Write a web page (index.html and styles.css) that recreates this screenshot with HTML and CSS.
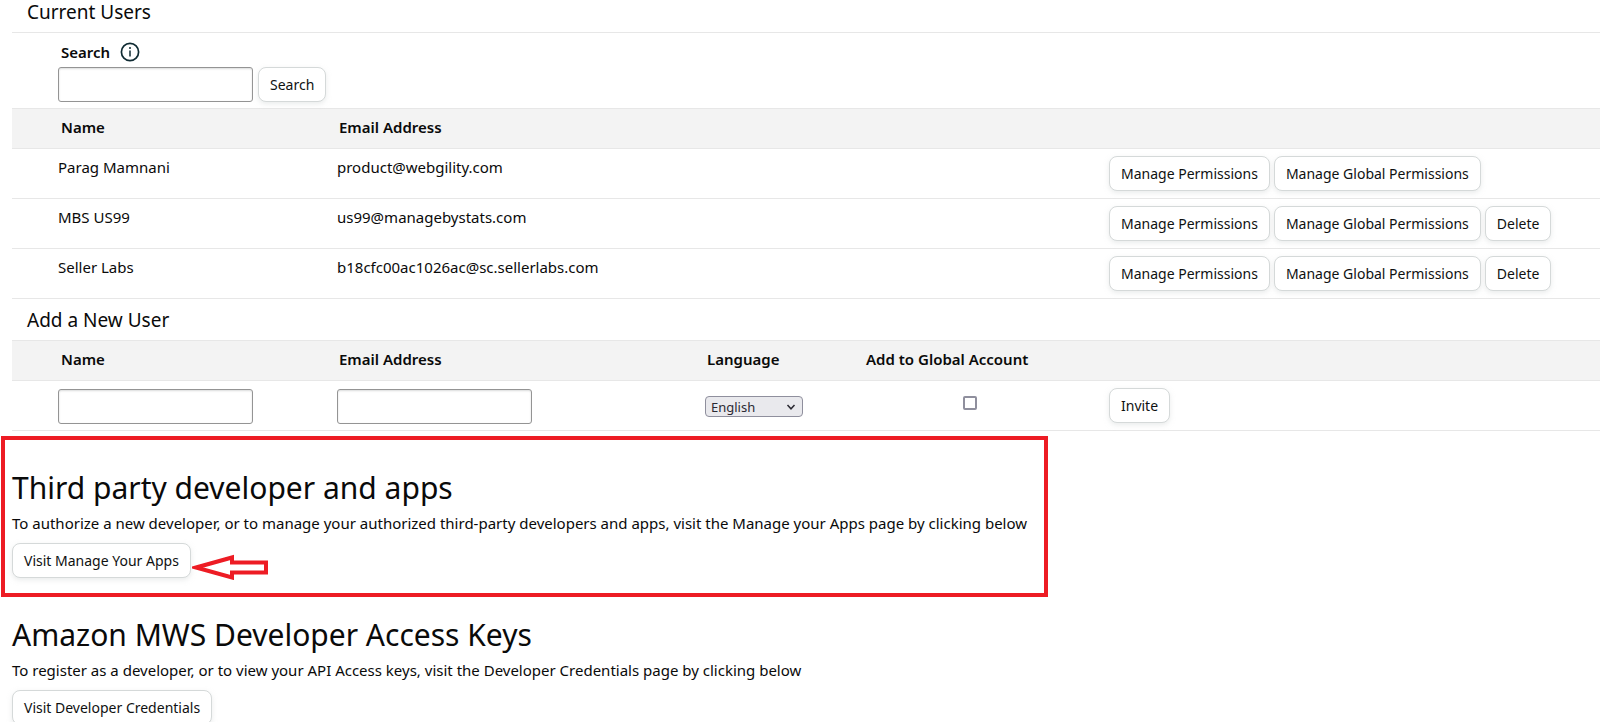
FILE: index.html
```html
<!DOCTYPE html>
<html lang="en">
<head>
<meta charset="utf-8">
<title>User Permissions</title>
<link rel="stylesheet" href="styles.css">
</head>
<body>
<main class="page">
  <section class="users">
    <h2 class="section-title first">Current Users</h2>
    <form class="search">
      <div class="search-label">
        <label for="search">Search</label>
        <svg class="info" viewBox="0 0 20 20" role="img" aria-label="Info">
          <circle cx="10" cy="10" r="8.6" fill="none" stroke="#0f2b33" stroke-width="1.7"/>
          <path d="M10 8.5V14.5" stroke="#0f2b33" stroke-width="1.5"/>
          <circle cx="10" cy="6" r="1" fill="#0f2b33"/>
        </svg>
      </div>
      <div class="search-row">
        <input class="field" id="search" type="text">
        <button class="btn" type="button">Search</button>
      </div>
    </form>
    <table class="grid">
      <colgroup><col class="c-name"><col class="c-email"><col class="c-lang"><col class="c-global"><col></colgroup>
      <thead>
        <tr><th>Name</th><th>Email Address</th><th></th><th></th><th></th></tr>
      </thead>
      <tbody>
        <tr><td>Parag Mamnani</td><td>product@webgility.com</td><td></td><td></td>
          <td><div class="actions"><button class="btn" type="button">Manage Permissions</button><button class="btn" type="button">Manage Global Permissions</button></div></td></tr>
        <tr><td>MBS US99</td><td>us99@managebystats.com</td><td></td><td></td>
          <td><div class="actions"><button class="btn" type="button">Manage Permissions</button><button class="btn" type="button">Manage Global Permissions</button><button class="btn" type="button">Delete</button></div></td></tr>
        <tr><td>Seller Labs</td><td>b18cfc00ac1026ac@sc.sellerlabs.com</td><td></td><td></td>
          <td><div class="actions"><button class="btn" type="button">Manage Permissions</button><button class="btn" type="button">Manage Global Permissions</button><button class="btn" type="button">Delete</button></div></td></tr>
      </tbody>
    </table>
    <h2 class="section-title">Add a New User</h2>
    <table class="grid">
      <colgroup><col class="c-name"><col class="c-email"><col class="c-lang"><col class="c-global"><col></colgroup>
      <thead>
        <tr><th><label for="name">Name</label></th><th><label for="email">Email Address</label></th><th><label for="language">Language</label></th><th><label for="global">Add to Global Account</label></th><th></th></tr>
      </thead>
      <tbody>
        <tr>
          <td><input class="field" id="name" type="text"></td>
          <td><input class="field" id="email" type="text"></td>
          <td><div class="cell"><span class="select-wrap"><select class="select" id="language"><option>English</option></select><svg class="chevron" viewBox="0 0 10 8"><path d="M1.5 2L5 5.8L8.5 2" fill="none" stroke="#2b2a33" stroke-width="1.5"/></svg></span></div></td>
          <td><div class="cell middle"><input class="check" id="global" type="checkbox"></div></td>
          <td><div class="actions"><button class="btn" type="button">Invite</button></div></td>
        </tr>
      </tbody>
    </table>
  </section>
  <section class="panel highlighted">
    <h1 class="title">Third party developer and apps</h1>
    <p class="text">To authorize a new developer, or to manage your authorized third-party developers and apps, visit the Manage your Apps page by clicking below</p>
    <div class="panel-action">
      <button class="btn" type="button">Visit Manage Your Apps</button>
      <svg class="arrow" viewBox="0 0 78 26" aria-hidden="true">
        <path d="M4 13.500L40 3.500V8.500H74V18.500H40V23.500Z" fill="#fff" stroke="#ed1c24" stroke-width="4"/>
      </svg>
    </div>
  </section>
  <section class="panel">
    <h1 class="title">Amazon MWS Developer Access Keys</h1>
    <p class="text">To register as a developer, or to view your API Access keys, visit the Developer Credentials page by clicking below</p>
    <div class="panel-action">
      <button class="btn" type="button">Visit Developer Credentials</button>
    </div>
  </section>
</main>
</body>
</html>
```
FILE: styles.css
```css
* { box-sizing: border-box; }
html { overflow: hidden; }
body {
  margin: 0;
  background: #fff;
  color: #0a0a0a;
  font: 15px/20px "Noto Sans", "Open Sans", sans-serif;
}
.users { padding-left: 12px; }
.section-title {
  margin: 0;
  padding: 9px 15px 8px;
  font-size: 19px;
  line-height: 24px;
  font-weight: 400;
}
.section-title.first {
  padding-top: 0;
  border-bottom: 1px solid #e7e7e7;
}
.search { padding: 9px 0 6px 46px; }
.search-label {
  display: flex;
  align-items: center;
  gap: 10px;
  padding-left: 3px;
  margin-bottom: 5px;
  font-weight: 600;
}
.info { width: 20px; height: 20px; }
.search-row { display: flex; gap: 5px; }
.field {
  display: block;
  width: 195px;
  height: 35px;
  padding: 0 8px;
  border: 1px solid #949494;
  border-radius: 3px;
  background: #fff;
  box-shadow: inset 0 1px 2px rgba(15, 17, 17, .15);
  font: inherit;
}
.btn {
  height: 35px;
  padding: 0 11px;
  border: 1px solid #d5d9d9;
  border-radius: 8px;
  background: #fff;
  box-shadow: 0 2px 5px rgba(213, 217, 217, .5);
  color: #0f1111;
  font: 14px/20px "Noto Sans", "Open Sans", sans-serif;
  white-space: nowrap;
}
.grid {
  width: 100%;
  table-layout: fixed;
  border-collapse: collapse;
}
.c-name { width: 323px; }
.c-email { width: 368px; }
.c-lang { width: 159px; }
.c-global { width: 213px; }
.grid th {
  height: 40px;
  padding: 0 0 4px 4px;
  border-top: 1px solid #e7e7e7;
  border-bottom: 1px solid #e7e7e7;
  background: #f3f3f3;
  font-weight: 600;
  text-align: left;
}
.grid td {
  height: 50px;
  padding: 8px 0 6px 2px;
  border-bottom: 1px solid #e7e7e7;
  vertical-align: top;
}
.grid th:first-child { padding-left: 49px; }
.grid td:first-child { padding-left: 46px; }
.grid td:last-child { padding: 7px 0 6px 34px; }
.actions { display: flex; gap: 4px; }
.cell { display: flex; align-items: center; height: 35px; }
.middle { justify-content: center; padding-bottom: 7px; }
.select-wrap { position: relative; display: flex; }
.select {
  width: 98px;
  height: 21px;
  padding: 0 5px;
  border: 1px solid #8f8f9d;
  border-radius: 4px;
  background: #e9e9ed;
  color: #2b2a33;
  appearance: none;
  font: 13px/18px "Noto Sans", "Open Sans", sans-serif;
}
.chevron {
  position: absolute;
  top: 7px;
  right: 7px;
  width: 10px;
  height: 8px;
  pointer-events: none;
}
.check {
  width: 14px;
  height: 14px;
  margin: 0;
  border: 2px solid #8f8f9d;
  border-radius: 2px;
  background: #fff;
  appearance: none;
}
.panel { padding: 16px 12px 12px; }
.title {
  margin: 0;
  font-size: 30px;
  line-height: 44px;
  font-weight: 400;
}
.text { margin: 3px 0 10px; }
.panel-action { display: flex; }
.highlighted {
  max-width: 1047px;
  margin: 5px 0 0 1px;
  padding: 26px 0 13px 7px;
  border: 4px solid #ed1c24;
}
.arrow { width: 78px; height: 26px; margin-top: 11px; margin-left: 1px; }
```
